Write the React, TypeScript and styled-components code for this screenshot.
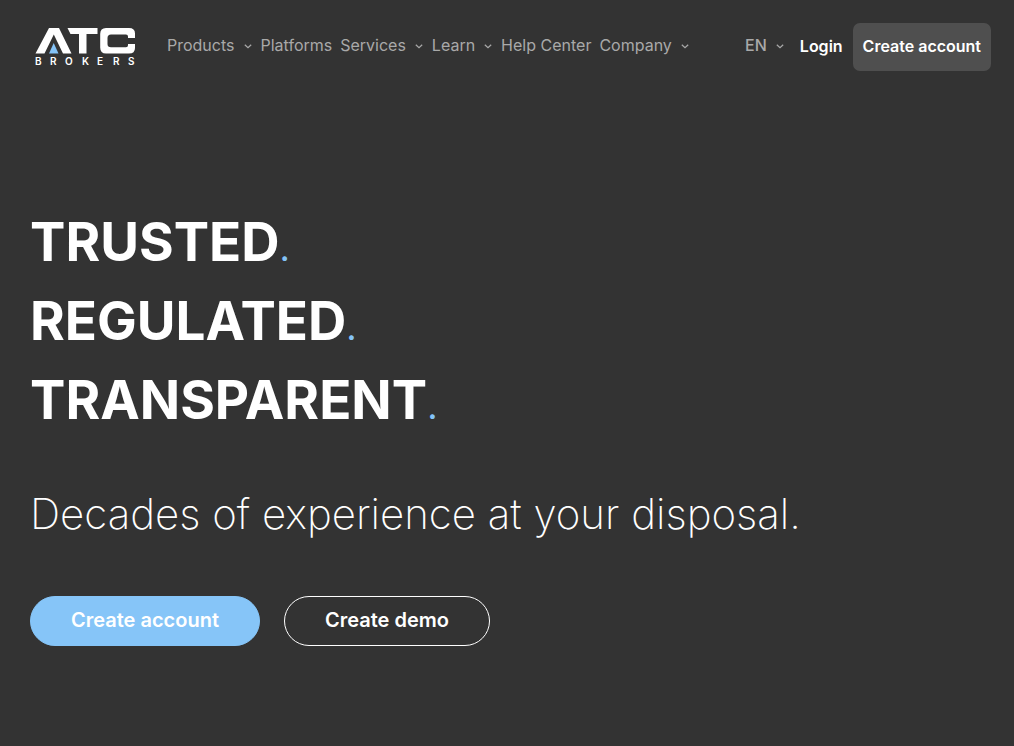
import React from "react";
import styled, { createGlobalStyle } from "styled-components";

const GlobalStyle = createGlobalStyle`
  *, *::before, *::after { box-sizing: border-box; }
  body {
    margin: 0;
    background: #333333;
    color: #ffffff;
    font-family: Inter, "Liberation Sans", sans-serif;
    font-size: 16px;
  }
`;

const Page = styled.div`
  min-height: 100vh;
`;

const Header = styled.header`
  display: flex;
  align-items: center;
  padding: 23px 23px 23px 35px;
`;

const LogoLink = styled.a`
  display: block;
  margin-right: 32px;
  svg { display: block; }
`;

const Nav = styled.nav`
  display: flex;
  flex: 1;
  gap: 8px;
`;

const menuText = `
  display: flex;
  align-items: center;
  gap: 8px;
  padding: 0 0 4px;
  border: 0;
  background: none;
  color: #a9a9a9;
  font-family: inherit;
  font-size: 16px;
  line-height: 24px;
  white-space: nowrap;
  text-decoration: none;
  cursor: pointer;
`;

const NavLink = styled.a`${menuText}`;

const MenuButton = styled.button<{ $strong?: boolean }>`
  ${menuText}
  font-weight: ${(p) => (p.$strong ? 500 : 400)};
`;

const Account = styled.div`
  display: flex;
  align-items: center;
  gap: 10px;
`;

const LoginLink = styled.a`
  margin-left: 5px;
  padding-bottom: 2px;
  color: #ffffff;
  font-weight: 600;
  line-height: 24px;
  text-decoration: none;
`;

const HeaderButton = styled.button`
  height: 48px;
  padding: 0 10px 2px;
  border: 0;
  border-radius: 7px;
  background: #4f4f4f;
  color: #ffffff;
  font: inherit;
  font-weight: 600;
  white-space: nowrap;
  cursor: pointer;
`;

const Hero = styled.main`
  padding: 109px 30px 100px;
`;

const Title = styled.h1`
  margin: 0;
  font-size: 53px;
  font-weight: 700;
  line-height: 79px;
`;

const TitleLine = styled.span`
  display: block;
`;

const Dot = styled.span`
  color: #84c3f7;
  font-size: 36px;
  font-weight: 400;
  line-height: 1;
`;

const Tagline = styled.p`
  margin: 41px 0 49px;
  font-size: 42px;
  font-weight: 200;
  line-height: 66px;
`;

const Actions = styled.div`
  display: flex;
  flex-wrap: wrap;
  gap: 24px;
`;

const PillButton = styled.button<{ $primary?: boolean }>`
  height: 50px;
  padding: 0 40px 2px;
  border: 1px solid ${(p) => (p.$primary ? "#86c5f8" : "#ffffff")};
  border-radius: 25px;
  background: ${(p) => (p.$primary ? "#86c5f8" : "transparent")};
  color: #ffffff;
  font: inherit;
  font-size: 20px;
  font-weight: 600;
  cursor: pointer;
`;

const Chevron = () => (
  <svg width="10" height="10" viewBox="0 0 10 10" fill="none" stroke="currentColor" strokeWidth="1.2" aria-hidden="true">
    <path d="M1.8 4.7 5 7.7 8.2 4.7" />
  </svg>
);

const Logo = () => (
  <svg width="100" height="40" viewBox="0 0 100 40" role="img" aria-label="ATC Brokers">
    <path fill="#fff" d="M0.500 26.500 14 1h10L36.500 26.500h-8.500L18.800 7.500 9.500 26.500z" />
    <path fill="#84c3f7" d="M18.700 16 23.500 26.500h-9.500z" />
    <path fill="#fff" d="M32.500 1h30v6H51.500v19.500h-7.500V7h-8.500z" />
    <path fill="#fff" d="M71 1h23q6 0 6 5.500V11h-7V9.500Q93 7.500 91 7.500H76q-3.500 0-3.500 3.500v6q0 3.200 3.500 3.200h15q2 0 2-2V17h7v4q0 5.500-6 5.500H71q-5.800 0-5.800-6v-13.500Q65.200 1 71 1z" />
    <text fill="#fff" fontFamily="Inter, sans-serif" fontSize="10" fontWeight="600" y="38" x="0 15 30 47 62 78 93">BROKERS</text>
  </svg>
);

const menu = [
  { label: "Products", hasMenu: true },
  { label: "Platforms", hasMenu: false },
  { label: "Services", hasMenu: true },
  { label: "Learn", hasMenu: true },
  { label: "Help Center", hasMenu: false },
  { label: "Company", hasMenu: true },
];

export default function App() {
  return (
    <Page>
      <GlobalStyle />
      <Header>
        <LogoLink href="#"><Logo /></LogoLink>
        <Nav aria-label="Main">
          {menu.map(({ label, hasMenu }) =>
            hasMenu ? (
              <MenuButton key={label} aria-haspopup="menu">{label}<Chevron /></MenuButton>
            ) : (
              <NavLink key={label} href="#">{label}</NavLink>
            )
          )}
        </Nav>
        <Account>
          <MenuButton $strong aria-haspopup="menu">EN<Chevron /></MenuButton>
          <LoginLink href="#">Login</LoginLink>
          <HeaderButton>Create account</HeaderButton>
        </Account>
      </Header>
      <Hero>
        <Title>
          {["TRUSTED", "REGULATED", "TRANSPARENT"].map((word) => (
            <TitleLine key={word}>{word}<Dot>.</Dot></TitleLine>
          ))}
        </Title>
        <Tagline>Decades of experience at your disposal.</Tagline>
        <Actions>
          <PillButton $primary>Create account</PillButton>
          <PillButton>Create demo</PillButton>
        </Actions>
      </Hero>
    </Page>
  );
}
